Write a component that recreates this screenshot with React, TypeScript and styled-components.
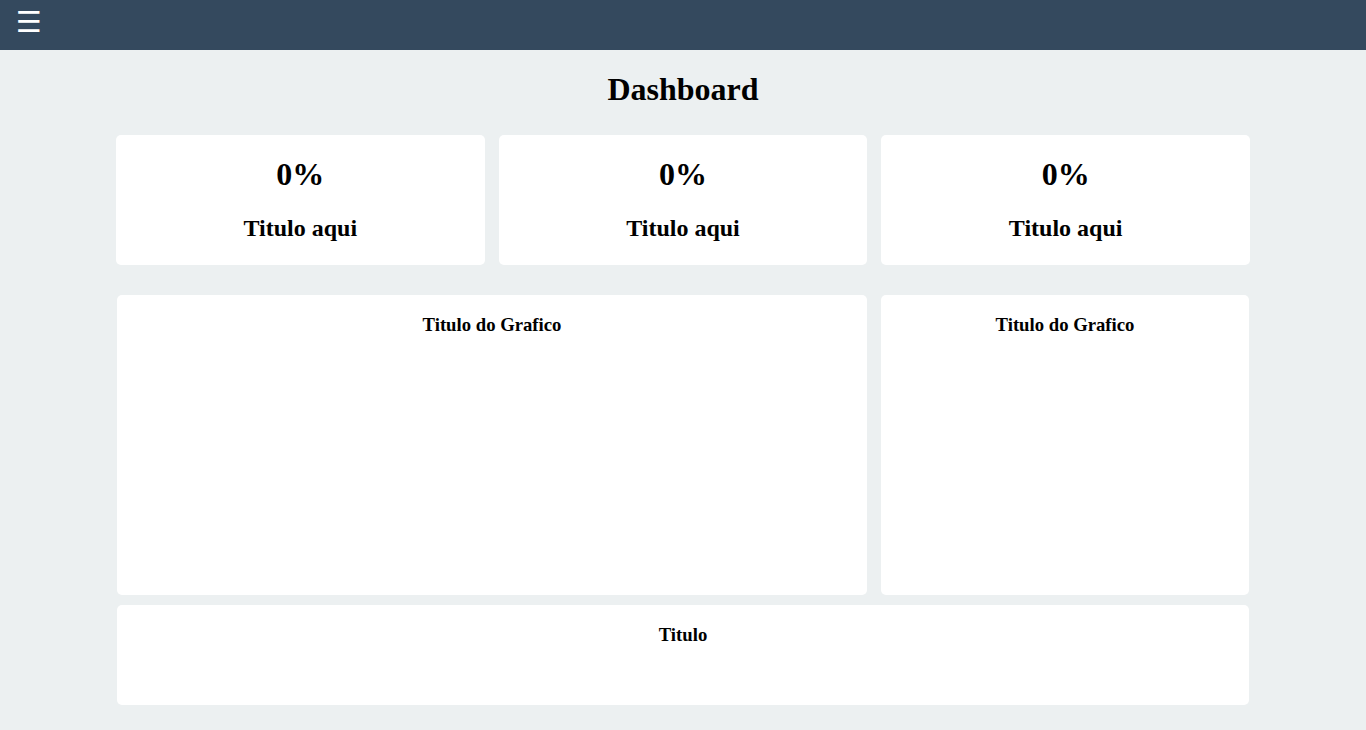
import React from "react";
import styled, { createGlobalStyle } from "styled-components";

const Global = createGlobalStyle`
  html, body { margin: 0; padding: 0; }
  body {
    background: #ecf0f1;
    font-family: "Liberation Serif", "Times New Roman", serif;
    color: #000;
  }
`;

const Header = styled.header`
  height: 50px;
  background: #34495e;
  display: flex;
  align-items: center;
  padding-left: 16px;
  box-sizing: border-box;
`;

const MenuButton = styled.span`
  color: #fff;
  font-family: "DejaVu Sans", sans-serif;
  font-size: 29px;
  line-height: 1;
  cursor: pointer;
  margin-top: -5px;
`;

const Main = styled.main`
  width: 1134px;
  margin: 0 auto;
  padding-bottom: 25px;
`;

const PageTitle = styled.h1`
  font-size: 32px;
  text-align: center;
  margin: 21px 0 27px;
`;

const Grid = styled.div<{ $cols: string; $inset?: number; $mb: number }>`
  display: grid;
  grid-template-columns: ${(p) => p.$cols};
  gap: 14px;
  margin: 0 ${(p) => p.$inset ?? 0}px ${(p) => p.$mb}px;
`;

const Card = styled.div<{ $h: number }>`
  background: #fff;
  border-radius: 5px;
  height: ${(p) => p.$h}px;
  text-align: center;
  overflow: hidden;
  display: flow-root;
`;

const Value = styled.h1`
  font-size: 32px;
  margin: 21.44px 0;
`;

const Label = styled.h2`
  font-size: 24px;
  margin: 19.92px 0;
`;

const ChartTitle = styled.h3`
  font-size: 18.72px;
  margin: 18.72px 0;
`;

export default function App() {
  return (
    <>
      <Global />
      <Header>
        <MenuButton>☰</MenuButton>
      </Header>
      <Main>
        <PageTitle>Dashboard</PageTitle>
        <Grid $cols="1fr 1fr 1fr" $mb={30}>
          {[0, 1, 2].map((i) => (
            <Card key={i} $h={130}>
              <Value>0%</Value>
              <Label>Titulo aqui</Label>
            </Card>
          ))}
        </Grid>
        <Grid $cols="750px 368px" $inset={1} $mb={10}>
          <Card $h={300}>
            <ChartTitle>Titulo do Grafico</ChartTitle>
          </Card>
          <Card $h={300}>
            <ChartTitle>Titulo do Grafico</ChartTitle>
          </Card>
        </Grid>
        <Grid $cols="1fr" $inset={1} $mb={0}>
          <Card $h={100}>
            <ChartTitle>Titulo</ChartTitle>
          </Card>
        </Grid>
      </Main>
    </>
  );
}
